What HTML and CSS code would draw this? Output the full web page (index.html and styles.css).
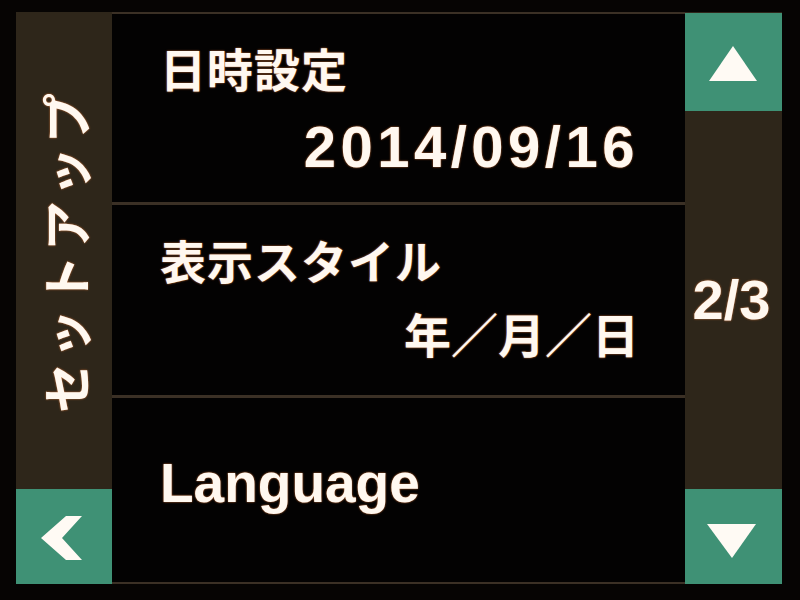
FILE: index.html
```html
<!DOCTYPE html>
<html lang="ja">
<head>
<meta charset="utf-8">
<title>セットアップ</title>
<link rel="stylesheet" href="styles.css">
</head>
<body>
<div class="screen">
  <div class="side side-left">
    <div class="side-title"><span class="vertical">セットアップ</span></div>
    <div class="btn btn-back">
      <svg width="96" height="95" viewBox="0 0 96 95"><polygon points="50,27 66,27 46,49 66,71 50,71 25,49" fill="#fffaf4"/></svg>
    </div>
  </div>
  <div class="list">
    <div class="row row-first">
      <div class="label">日時設定</div>
      <div class="value value-date">2014/09/16</div>
    </div>
    <div class="row row-second">
      <div class="label">表示スタイル</div>
      <div class="value value-jp">年／月／日</div>
    </div>
    <div class="row row-third">
      <div class="label label-latin">Language</div>
    </div>
  </div>
  <div class="side side-right">
    <div class="btn btn-up">
      <svg width="97" height="97" viewBox="0 0 97 97"><polygon points="48,32 72,67 24,67" fill="#fffaf4"/></svg>
    </div>
    <div class="page">2/3</div>
    <div class="btn btn-down">
      <svg width="97" height="95" viewBox="0 0 97 95"><polygon points="22,35 71,35 47,69" fill="#fffaf4"/></svg>
    </div>
  </div>
</div>
</body>
</html>
```

FILE: styles.css
```css
html, body {
  margin: 0;
  padding: 0;
}
body {
  background: #060403;
  width: 800px;
  height: 600px;
  overflow: hidden;
  color: #fff8f0;
  font-family: "Liberation Sans", "Noto Sans CJK JP", sans-serif;
  font-weight: 700;
}
.screen {
  display: grid;
  grid-template-columns: 96px 573px 97px;
  margin: 12px 18px 0 16px;
  height: 572px;
}
.side {
  display: flex;
  flex-direction: column;
  background: #2e261a;
}
.side-title {
  flex: 1;
  display: flex;
  align-items: center;
  justify-content: center;
}
.vertical {
  writing-mode: vertical-rl;
  text-orientation: sideways;
  transform: rotate(180deg);
  font-family: "Noto Sans CJK JP", sans-serif;
  font-size: 50px;
  line-height: 50px;
  letter-spacing: 4px;
  margin-right: 0;
  text-shadow: 0 0 2px #e07a3a;
}
.btn {
  background: #3f9175;
  display: flex;
  align-items: center;
  justify-content: center;
}
.btn svg {
  display: block;
}
.btn-back {
  height: 95px;
}
.btn-up {
  height: 98px;
  margin-top: 1px;
}
.btn-down {
  height: 95px;
}
.page {
  flex: 1;
  display: flex;
  align-items: center;
  justify-content: center;
  font-size: 56px;
  line-height: 56px;
  padding-right: 4px;
  text-shadow: 0 0 2px #e07a3a;
}
.list {
  display: flex;
  flex-direction: column;
  background: #030202;
}
.row {
  display: flex;
  flex-direction: column;
  padding: 0 46px 0 48px;
  box-sizing: border-box;
}
.row-first {
  height: 190px;
  border-top: 2px solid #3b3025;
  padding-top: 30px;
}
.row-second {
  height: 193px;
  border-top: 3px solid #3b3025;
  padding-top: 31px;
}
.row-third {
  height: 189px;
  border-top: 3px solid #3b3025;
  border-bottom: 2px solid #3b3025;
  padding-top: 57px;
}
.label {
  font-family: "Noto Sans CJK JP", sans-serif;
  font-size: 46px;
  line-height: 46px;
  letter-spacing: 1px;
  text-shadow: 0 0 2px #e07a3a;
}
.label-latin {
  font-family: "Liberation Sans", sans-serif;
  font-size: 55px;
  line-height: 56px;
  letter-spacing: 0;
}
.value {
  align-self: flex-end;
  text-shadow: 0 0 2px #e07a3a;
}
.value-date {
  margin-top: 28px;
  font-size: 58px;
  line-height: 58px;
  letter-spacing: 4.5px;
  margin-right: 0;
}
.value-jp {
  margin-top: 27px;
  font-family: "Noto Sans CJK JP", sans-serif;
  font-size: 47px;
  line-height: 47px;
}
```
